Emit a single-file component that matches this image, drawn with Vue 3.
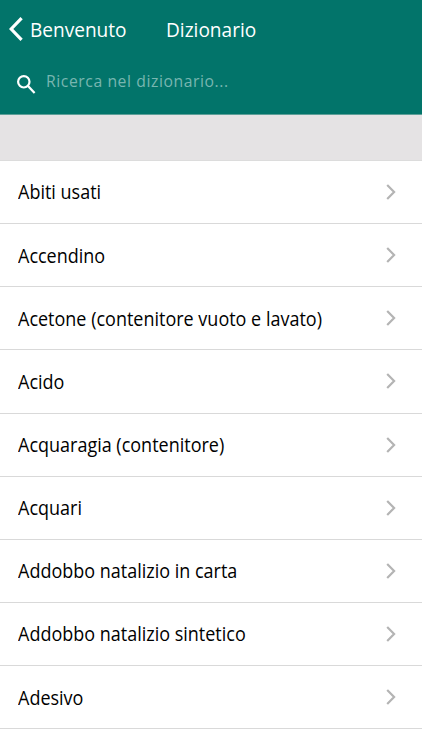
<script setup>
const items = [
  'Abiti usati',
  'Accendino',
  'Acetone (contenitore vuoto e lavato)',
  'Acido',
  'Acquaragia (contenitore)',
  'Acquari',
  'Addobbo natalizio in carta',
  'Addobbo natalizio sintetico',
  'Adesivo',
]
</script>

<template>
  <div class="screen">
    <header class="header">
      <nav class="nav">
        <a class="back">
          <svg class="back-icon" viewBox="0 0 14 24"><path d="M12.6 1.2 2.2 12l10.4 10.8" /></svg>
          <span class="back-label">Benvenuto</span>
        </a>
        <h1 class="title">Dizionario</h1>
      </nav>
      <div class="search">
        <svg class="search-icon" viewBox="0 0 20 20"><circle cx="6.8" cy="6.8" r="5.7" /><path d="m10.8 10.8 6.8 7.2" /></svg>
        <span class="placeholder">Ricerca nel dizionario...</span>
      </div>
    </header>
    <div class="divider"></div>
    <ul class="list">
      <li v-for="item in items" :key="item" class="row">
        <span class="label">{{ item }}</span>
        <svg class="chevron" viewBox="0 0 10 16"><path d="m1.2 1 6.9 7-6.9 7" /></svg>
      </li>
    </ul>
  </div>
</template>

<style>
body { margin: 0; background: #fff; }
</style>

<style scoped>
.screen { width: 422px; height: 750px; overflow: hidden; background: #fff; color: #000; font-family: "Open Sans", "Noto Sans", sans-serif; }
.header { height: 115px; background: #02746a; color: #fff; box-sizing: border-box; border-bottom: 1px solid #5d9f98; }
.nav { display: flex; align-items: center; height: 60px; padding-left: 9px; }
.back { display: flex; align-items: center; width: 156.5px; }
.back-icon { width: 14px; height: 24px; fill: none; stroke: #fff; stroke-width: 3.2; margin: -2px 6.5px 0 0; }
.back-label, .title { font-size: 20px; line-height: 28px; font-weight: 400; margin: 0; white-space: nowrap; transform: scaleX(.953); transform-origin: left center; }
.search { display: flex; align-items: center; height: 44px; padding-left: 17px; }
.search-icon { width: 20px; height: 20px; fill: none; stroke: #fff; stroke-width: 2.2; margin: 5px 9px 0 0; }
.placeholder { font-size: 16.5px; line-height: 24px; margin-bottom: 2px; letter-spacing: .6px; color: #78b6b0; white-space: nowrap; transform: scaleX(.953); transform-origin: left center; }
.divider { height: 46px; background: #e5e3e4; border-bottom: 1px solid #dcdcdc; box-sizing: border-box; }
.list { margin: 0; padding: 0; list-style: none; }
.row { display: flex; align-items: center; justify-content: space-between; height: 63.15px; padding: 0 26px 0 18px; border-bottom: 1px solid #d9d9d9; box-sizing: border-box; }
.label { font-size: 19.3px; line-height: 26px; padding-top: .8px; white-space: nowrap; transform: scaleX(.933); transform-origin: left center; }
.chevron { width: 10px; height: 16px; fill: none; stroke: #b4b4b4; stroke-width: 2.2; }
</style>
